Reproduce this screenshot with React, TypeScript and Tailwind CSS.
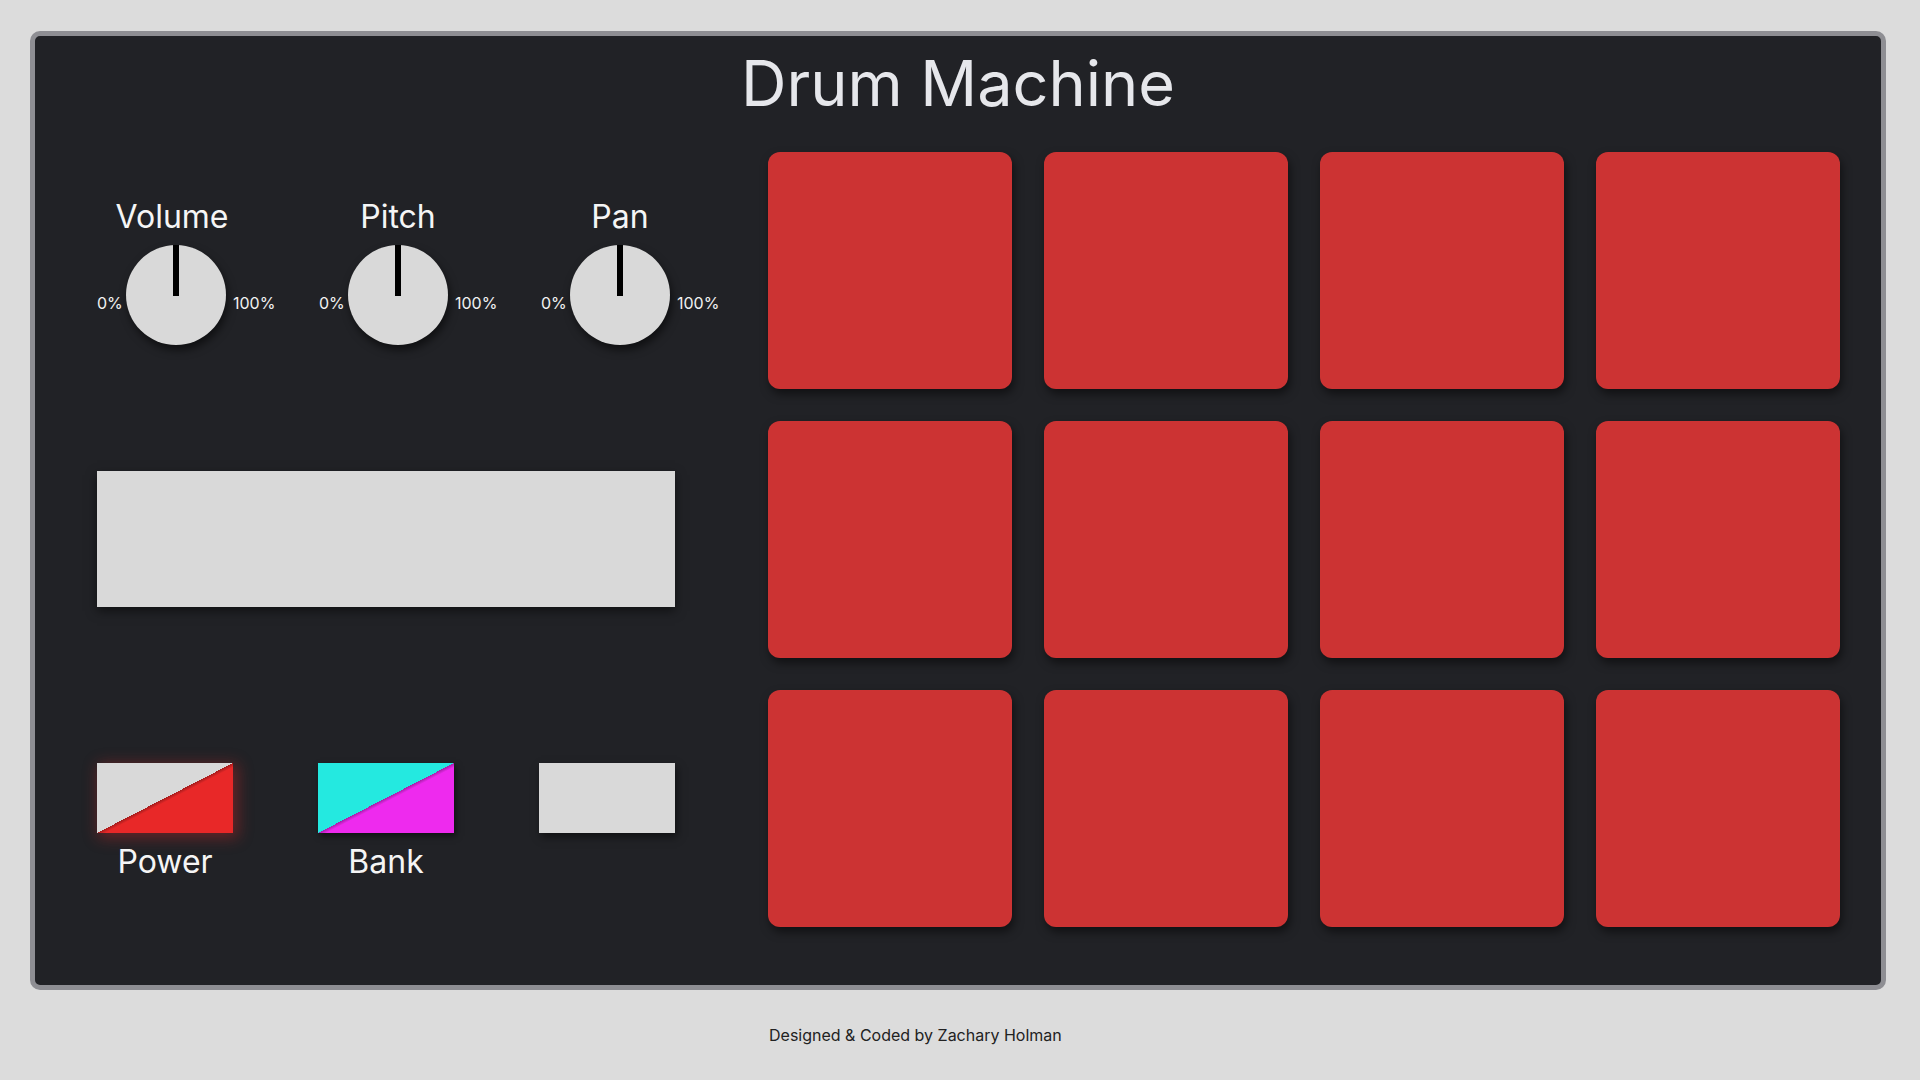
import React from "react";

const knobs = [
  { label: "Volume", shift: "-ml-[8px]" },
  { label: "Pitch", shift: "" },
  { label: "Pan", shift: "" },
];

function Knob({ label, shift }: { label: string; shift: string }) {
  return (
    <div className="flex w-[222px] shrink-0 items-start">
      <div className="mt-[93px] w-[22px] shrink-0 whitespace-nowrap text-[16px] leading-none text-[#f2f2f2]">0%</div>
      <div className="ml-[7px] flex w-[100px] shrink-0 flex-col items-center">
        <div className={`whitespace-nowrap text-[32px] leading-[30px] text-[#f5f5f5] ${shift}`}>{label}</div>
        <div className="relative mt-[13px] h-[100px] w-[100px] shrink-0 rounded-full bg-[#d9d9d9] shadow-[2px_5px_8px_rgba(0,0,0,0.55)]">
          <div className="absolute left-[47px] top-0 h-[51px] w-[6px] bg-black" />
        </div>
      </div>
      <div className="ml-[7px] mt-[93px] shrink-0 whitespace-nowrap text-[16px] leading-none text-[#f2f2f2]">100%</div>
    </div>
  );
}

export default function App() {
  const pads = Array.from({ length: 12 }, (_, i) => i);
  return (
    <div className="min-h-screen bg-[#dcdcdc] pl-[30px] pt-[31px] [font-family:Inter,'Noto_Sans',sans-serif]">
      <div className="flex h-[959px] w-[1856px] flex-col rounded-[10px] border-[5px] border-[#8e8e93] bg-[#212226]">
        <h1 className="mt-[15px] text-center text-[63px] font-normal leading-[64px] text-[#e6e7eb]">
          Drum Machine
        </h1>
        <div className="mt-[37px] flex pl-[62px]">
          <div className="flex w-[578px] shrink-0 flex-col">
            <div className="mt-[50px] flex">
              {knobs.map((k) => (
                <Knob key={k.label} label={k.label} shift={k.shift} />
              ))}
            </div>
            <div className="mt-[126px] h-[136px] w-[578px] bg-[#d9d9d9] shadow-[0_4px_10px_rgba(0,0,0,0.5)]" />
            <div className="mt-[156px] flex justify-between">
              <div className="flex w-[136px] flex-col items-center">
                <div className="h-[70px] w-[136px] bg-[linear-gradient(to_bottom_right,#d9d9d9_50%,#a51c1c_50%,#e82828_53%)] shadow-[3px_3px_14px_2px_rgba(232,40,40,0.35)]" />
                <div className="mt-[14px] whitespace-nowrap text-[32px] leading-[30px] text-[#f5f5f5]">Power</div>
              </div>
              <div className="flex w-[136px] flex-col items-center">
                <div className="h-[70px] w-[136px] bg-[linear-gradient(to_bottom_right,#24e9e0_50%,#a51fa8_50%,#ee2aee_53%)] shadow-[2px_3px_6px_rgba(0,0,0,0.5)]" />
                <div className="mt-[14px] whitespace-nowrap text-[32px] leading-[30px] text-[#f5f5f5]">Bank</div>
              </div>
              <div className="flex w-[136px] flex-col items-center">
                <div className="h-[70px] w-[136px] bg-[#d9d9d9] shadow-[2px_4px_8px_rgba(0,0,0,0.5)]" />
              </div>
            </div>
          </div>
          <div className="ml-[93px] grid grid-cols-[repeat(4,244px)] gap-x-[32px] gap-y-[32px]">
            {pads.map((i) => (
              <div
                key={i}
                className="h-[237px] w-[244px] rounded-[12px] bg-[#cc3333] shadow-[2px_5px_10px_rgba(0,0,0,0.5)]"
              />
            ))}
          </div>
        </div>
      </div>
      <div className="mt-[37px] pl-[739px] text-[16px] leading-none text-[#222222]">
        Designed &amp; Coded by Zachary Holman
      </div>
    </div>
  );
}
